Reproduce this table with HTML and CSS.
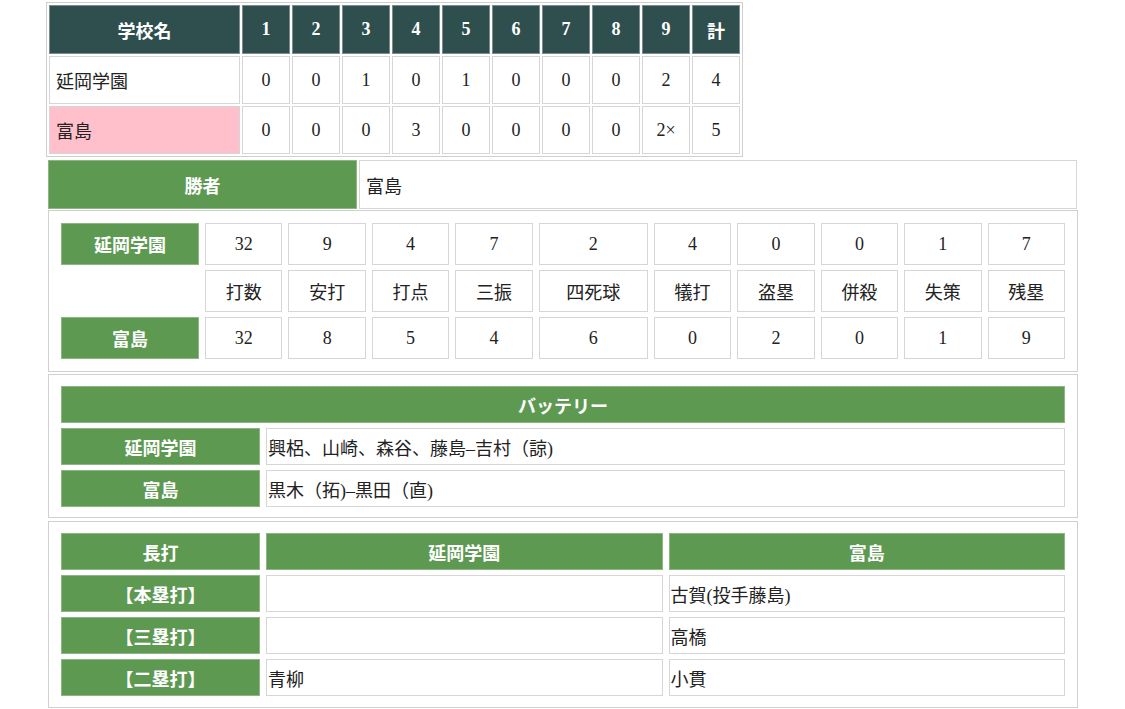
FILE: index.html
```html
<!DOCTYPE html>
<html lang="ja">
  <head>
    <meta charset="UTF-8" />
    <meta name="viewport" content="width=device-width, initial-scale=1.0" />
    <title>試合結果</title>
    <link rel="stylesheet" href="styles.css">
  </head>
  <body>
    <div id="result">
      <!-- スコアボード -->
      <div class="score">
        <div class="cell head">学校名</div>
        <div class="cell head">1</div>
        <div class="cell head">2</div>
        <div class="cell head">3</div>
        <div class="cell head">4</div>
        <div class="cell head">5</div>
        <div class="cell head">6</div>
        <div class="cell head">7</div>
        <div class="cell head">8</div>
        <div class="cell head">9</div>
        <div class="cell head">計</div>

        <div class="cell name">延岡学園</div>
        <div class="cell">0</div>
        <div class="cell">0</div>
        <div class="cell">1</div>
        <div class="cell">0</div>
        <div class="cell">1</div>
        <div class="cell">0</div>
        <div class="cell">0</div>
        <div class="cell">0</div>
        <div class="cell">2</div>
        <div class="cell">4</div>

        <div class="cell name winner">富島</div>
        <div class="cell">0</div>
        <div class="cell">0</div>
        <div class="cell">0</div>
        <div class="cell">3</div>
        <div class="cell">0</div>
        <div class="cell">0</div>
        <div class="cell">0</div>
        <div class="cell">0</div>
        <div class="cell">2×</div>
        <div class="cell">5</div>
      </div>

      <!-- 勝者 -->
      <div class="win">
        <div class="cell label">勝者</div>
        <div class="cell text">富島</div>
      </div>

      <!-- 成績 -->
      <div class="box stats">
        <div class="cell label">延岡学園</div>
        <div class="cell">32</div>
        <div class="cell">9</div>
        <div class="cell">4</div>
        <div class="cell">7</div>
        <div class="cell">2</div>
        <div class="cell">4</div>
        <div class="cell">0</div>
        <div class="cell">0</div>
        <div class="cell">1</div>
        <div class="cell">7</div>

        <div class="blank"></div>
        <div class="cell">打数</div>
        <div class="cell">安打</div>
        <div class="cell">打点</div>
        <div class="cell">三振</div>
        <div class="cell">四死球</div>
        <div class="cell">犠打</div>
        <div class="cell">盗塁</div>
        <div class="cell">併殺</div>
        <div class="cell">失策</div>
        <div class="cell">残塁</div>

        <div class="cell label">富島</div>
        <div class="cell">32</div>
        <div class="cell">8</div>
        <div class="cell">5</div>
        <div class="cell">4</div>
        <div class="cell">6</div>
        <div class="cell">0</div>
        <div class="cell">2</div>
        <div class="cell">0</div>
        <div class="cell">1</div>
        <div class="cell">9</div>
      </div>

      <!-- バッテリー -->
      <div class="box battery">
        <div class="cell label wide">バッテリー</div>
        <div class="cell label">延岡学園</div>
        <div class="cell text">興梠、山崎、森谷、藤島–吉村（諒)</div>
        <div class="cell label">富島</div>
        <div class="cell text">黒木（拓)–黒田（直)</div>
      </div>

      <!-- 長打 -->
      <div class="box hits">
        <div class="cell label">長打</div>
        <div class="cell label">延岡学園</div>
        <div class="cell label">富島</div>

        <div class="cell label">【本塁打】</div>
        <div class="cell text"></div>
        <div class="cell text">古賀(投手藤島)</div>

        <div class="cell label">【三塁打】</div>
        <div class="cell text"></div>
        <div class="cell text">高橋</div>

        <div class="cell label">【二塁打】</div>
        <div class="cell text">青柳</div>
        <div class="cell text">小貫</div>
      </div>
    </div>
  </body>
</html>
```

FILE: styles.css
```css
body {
  margin: 0;
  font-family: "Liberation Serif", "Noto Sans CJK JP", serif;
  font-size: 18px;
  color: #222;
  background-color: white;
}
#result {
  width: 1032px;
  margin: 0 0 0 46px;
  padding-top: 2px;
}
.cell {
  box-sizing: border-box;
  display: flex;
  align-items: center;
  justify-content: center;
  border: 1px solid #d6d6d6;
  background-color: white;
  white-space: nowrap;
}
.cell.text {
  justify-content: flex-start;
  padding-left: 1px;
}
.cell.label {
  background-color: #5e9952;
  border-color: #8db683;
  color: white;
  font-weight: bold;
}

/* スコアボード */
.score {
  display: grid;
  width: max-content;
  grid-template-columns: 191px repeat(10, 48px);
  grid-template-rows: 49px 48px 48px;
  gap: 2px;
  padding: 2px;
  border: 1px solid #cfcfcf;
}
.score .head {
  background-color: #2f4f4f;
  border-color: #7e8c8c;
  color: white;
  font-weight: bold;
}
.score .name {
  justify-content: flex-start;
  padding-left: 6px;
}
.score .winner {
  background-color: #ffc0cb;
}

/* 勝者 */
.win {
  display: grid;
  grid-template-columns: 309px 1fr;
  grid-template-rows: 49px;
  gap: 2px;
  width: 1029px;
  margin: 3px 0 0 2px;
}
.win .text {
  padding-left: 6px;
}

.box {
  box-sizing: border-box;
  width: 1030px;
  margin-left: 2px;
  border: 1px solid #d0d0d0;
  padding: 11px 12px;
}

/* 成績 */
.stats {
  display: grid;
  grid-template-columns: 138px repeat(4, 1fr) 109px repeat(5, 1fr);
  grid-template-rows: repeat(3, 42px);
  column-gap: 6px;
  row-gap: 5px;
  margin-top: 1px;
  padding-top: 12px;
  padding-bottom: 12px;
}

/* バッテリー */
.battery {
  display: grid;
  grid-template-columns: 199px 1fr;
  grid-auto-rows: 37px;
  column-gap: 6px;
  row-gap: 5px;
  margin-top: 2px;
  padding-bottom: 10px;
}
.battery .wide {
  grid-column: 1 / 3;
}

/* 長打 */
.hits {
  display: grid;
  grid-template-columns: 199px 1fr 1fr;
  grid-auto-rows: 37px;
  column-gap: 6px;
  row-gap: 5px;
  margin-top: 3px;
}
```
